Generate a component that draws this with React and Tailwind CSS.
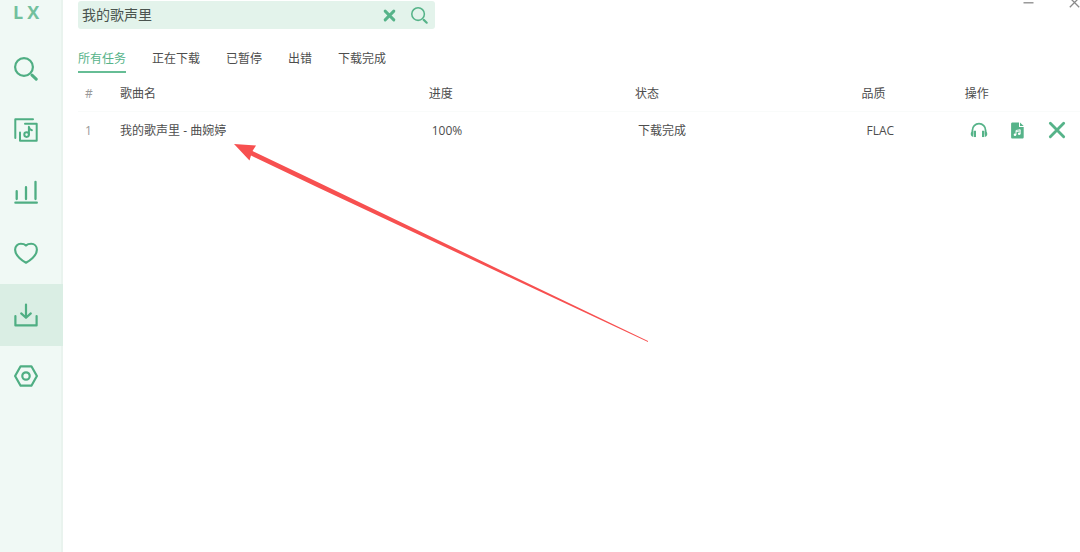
import React, { useState } from 'react';

const SearchIcon = ({ className }) => (
  <svg viewBox="0 0 24 24" className={className} fill="none" stroke="currentColor">
    <circle cx="10" cy="10" r="8.9" strokeWidth="2.2" />
    <path d="M18 18.2L22.2 22.2" strokeWidth="3" strokeLinecap="round" />
  </svg>
);

const SongListIcon = ({ className }) => (
  <svg viewBox="0 0 24 24" className={className} fill="none" stroke="currentColor" strokeWidth="2" strokeLinecap="round" strokeLinejoin="round">
    <path d="M1.3 20V1.3H19" />
    <path d="M6 14.5V22.7H22.7V5.8H11" />
    <circle cx="12.6" cy="16.6" r="2.3" />
    <path d="M14.9 16.6V8.8C15.2 10.6 16.2 11.7 17.9 12.2" />
  </svg>
);

const LeaderboardIcon = ({ className }) => (
  <svg viewBox="0 0 24 24" className={className} fill="none" stroke="currentColor" strokeWidth="2.3" strokeLinecap="round">
    <path d="M1.4 22.7H22.8" />
    <path d="M2.7 19V11.2M12 19V7.2M21.5 19V1.8" />
  </svg>
);

const HeartIcon = ({ className }) => (
  <svg viewBox="0 0 24 24" className={className} fill="none" stroke="currentColor" strokeWidth="2.1" strokeLinejoin="round">
    <path d="M12 21.8C9 20.2 1.1 15 1.1 8.8C1.1 5.2 3.6 2.8 6.8 2.8C9 2.8 10.7 3.3 12 4.6C13.3 3.3 15 2.8 17.2 2.8C20.4 2.8 22.9 5.2 22.9 8.8C22.9 15 15 20.2 12 21.8Z" />
  </svg>
);

const DownloadIcon = ({ className }) => (
  <svg viewBox="0 0 24 24" className={className} fill="none" stroke="currentColor" strokeWidth="2.2" strokeLinecap="round" strokeLinejoin="round">
    <path d="M1.4 13.1V22.4H22.6V13.1" />
    <path d="M12 1.6V14.6M7.2 10.4L12 14.8L16.8 10.4" />
  </svg>
);

const SettingIcon = ({ className }) => (
  <svg viewBox="0 0 24 24" className={className} fill="none" stroke="currentColor" strokeWidth="2.2" strokeLinejoin="round">
    <path d="M6.6 2.3H17.4L22.9 12L17.4 21.7H6.6L1.1 12Z" />
    <circle cx="12" cy="12" r="3.7" />
  </svg>
);

const CrossIcon = ({ className, strokeWidth }) => (
  <svg viewBox="0 0 24 24" className={className} fill="none" stroke="currentColor" strokeWidth={strokeWidth} strokeLinecap="round">
    <path d="M4 4L20 20M20 4L4 20" />
  </svg>
);

const HeadphoneIcon = ({ className }) => (
  <svg viewBox="0 0 24 24" className={className} fill="currentColor">
    <path d="M3.2 18V12.5C3.2 7.4 7 3.6 12 3.6C17 3.6 20.8 7.4 20.8 12.5V18" fill="none" stroke="currentColor" strokeWidth="2.4" />
    <path d="M5.2 13H8V21.4H5.2Z" />
    <path d="M16 13H18.8V21.4H16Z" />
    <path d="M4.3 13.2C2.1 13.5 1 15 1 17C1 19.2 2.1 21 4.3 21.2Z" />
    <path d="M19.7 13.2C21.9 13.5 23 15 23 17C23 19.2 21.9 21 19.7 21.2Z" />
  </svg>
);

const MusicFileIcon = ({ className }) => (
  <svg viewBox="0 0 13 17" className={className}>
    <path d="M1.5 0.5H8V5H12.7V15C12.7 16 12.2 16.5 11.2 16.5H1.5C0.6 16.5 0.1 16 0.1 15V2C0.1 1 0.6 0.5 1.5 0.5Z" fill="currentColor" />
    <path d="M9 0.5L12.7 4.1H9Z" fill="currentColor" />
    <path d="M5 12.6V8.5L9.2 7.7V11.7M5 9.7L9.2 8.9" fill="none" stroke="#fff" strokeWidth="0.9" />
    <circle cx="4" cy="12.7" r="1.3" fill="#fff" />
    <circle cx="8.2" cy="11.8" r="1.3" fill="#fff" />
  </svg>
);

const menus = [
  { id: 'search', label: '搜索', Icon: SearchIcon },
  { id: 'songList', label: '歌单', Icon: SongListIcon },
  { id: 'leaderboard', label: '排行榜', Icon: LeaderboardIcon },
  { id: 'love', label: '收藏', Icon: HeartIcon },
  { id: 'download', label: '下载', Icon: DownloadIcon },
  { id: 'setting', label: '设置', Icon: SettingIcon },
];

const tabs = ['所有任务', '正在下载', '已暂停', '出错', '下载完成'];

const initialTasks = [
  { id: 1, name: '我的歌声里 - 曲婉婷', progress: '100%', status: '下载完成', quality: 'FLAC' },
];

const Sidebar = ({ active, setActive }) => (
  <aside className="w-[63px] shrink-0 border-r-2 border-[#e9f3ee] bg-[#f0f9f5] text-[#4fae83]">
    <div className="flex h-[38px] gap-1 pl-[13px] text-lg leading-6 font-bold text-[#72c09d]">
      <span>L</span>
      <span>X</span>
    </div>
    <nav className="grid h-[369px] grid-rows-6">
      {menus.map(({ id, label, Icon }) => (
        <button
          key={id}
          aria-label={label}
          onClick={() => setActive(id)}
          className={`-mr-0.5 flex items-center pl-[14px] ${active === id ? 'bg-[#daeee4]' : ''}`}
        >
          <Icon className="size-6" />
        </button>
      ))}
    </nav>
  </aside>
);

const SearchBar = ({ keyword, setKeyword }) => (
  <div className="flex h-7 w-[357px] items-center rounded-[3px] bg-[#e3f3eb] text-[#56b389]">
    <input
      type="text"
      aria-label="搜索歌曲"
      value={keyword}
      onChange={(e) => setKeyword(e.target.value)}
      className="min-w-0 flex-1 bg-transparent pl-1 text-sm text-[#4a544f] outline-none"
    />
    <button aria-label="清除" onClick={() => setKeyword('')} className="flex w-[30px] justify-center">
      <CrossIcon className="size-[13px]" strokeWidth="5.5" />
    </button>
    <button aria-label="搜索" className="flex w-[31px] justify-center">
      <SearchIcon className="size-[17px]" />
    </button>
  </div>
);

const TaskTable = ({ tasks, removeTask }) => (
  <table className="w-full table-fixed text-left text-xs text-[#4d4d4d]">
    <thead>
      <tr className="h-9 border-b border-[#f9fbfa]">
        <th className="w-[3.6%] pt-0.5 pl-[7px] font-normal text-[#999]">#</th>
        <th className="w-[30.8%] px-1.5 pt-0.5 font-normal">歌曲名</th>
        <th className="w-[20.6%] px-1.5 pt-0.5 font-normal">进度</th>
        <th className="w-[22.6%] px-1.5 pt-0.5 font-normal">状态</th>
        <th className="w-[10.3%] px-1.5 pt-0.5 font-normal">品质</th>
        <th className="w-[12.1%] px-1.5 pt-0.5 font-normal">操作</th>
      </tr>
    </thead>
    <tbody>
      {tasks.map((task) => (
        <tr key={task.id} className="h-[38px]">
          <td className="pt-0.5 pl-[7px] text-[#999]">{task.id}</td>
          <td className="px-1.5 pt-0.5">{task.name}</td>
          <td className="px-[9px] pt-0.5">{task.progress}</td>
          <td className="px-[9px] pt-0.5">{task.status}</td>
          <td className="px-[11px] pt-0.5">{task.quality}</td>
          <td className="pl-2.5">
            <div className="flex items-center gap-[19px] text-[#56b389]">
              <button aria-label="播放" className="flex size-5 items-center justify-center">
                <HeadphoneIcon className="size-[18px]" />
              </button>
              <button aria-label="打开文件" className="flex size-5 items-center justify-center">
                <MusicFileIcon className="h-[17px] w-[13px]" />
              </button>
              <button aria-label="删除" onClick={() => removeTask(task.id)} className="flex size-5 items-center justify-center">
                <CrossIcon className="size-5" strokeWidth="3.4" />
              </button>
            </div>
          </td>
        </tr>
      ))}
    </tbody>
  </table>
);

const App = () => {
  const [active, setActive] = useState('download');
  const [keyword, setKeyword] = useState('我的歌声里');
  const [tab, setTab] = useState(tabs[0]);
  const [tasks, setTasks] = useState(initialTasks);

  const removeTask = (id) => setTasks(tasks.filter((task) => task.id !== id));

  return (
    <div className="relative flex min-h-screen overflow-hidden bg-white font-['Open_Sans','Noto_Sans_CJK_SC',sans-serif]">
      <Sidebar active={active} setActive={setActive} />

      <main className="min-w-0 flex-1 pt-px pl-[15px]">
        <div className="flex items-start justify-between">
          <SearchBar keyword={keyword} setKeyword={setKeyword} />
          {/* Window controls */}
          <div className="-mt-1 flex gap-[35px] text-[#8a8a8a]">
            <button aria-label="最小化">
              <svg viewBox="0 0 11 11" className="size-[11px]" stroke="currentColor" strokeWidth="1.3">
                <path d="M0.5 5.8H10.5" />
              </svg>
            </button>
            <button aria-label="关闭">
              <svg viewBox="0 0 11 11" className="size-[11px]" stroke="currentColor" strokeWidth="1.3">
                <path d="M0.8 0.8L10.2 10.2M10.2 0.8L0.8 10.2" />
              </svg>
            </button>
          </div>
        </div>

        <div className="mt-[17px] mb-0.5 flex gap-[26px] text-xs text-[#4d4d4d]">
          {tabs.map((item) => (
            <button
              key={item}
              onClick={() => setTab(item)}
              className={`h-[27px] border-b-2 leading-6 ${
                tab === item ? 'border-[#66bd95] text-[#56b389]' : 'border-transparent'
              }`}
            >
              {item}
            </button>
          ))}
        </div>

        <TaskTable tasks={tasks} removeTask={removeTask} />
      </main>

      {/* Arrow pointing at the finished song */}
      <svg viewBox="0 0 416 200" className="pointer-events-none absolute top-[143px] left-[233px] h-[200px] w-[416px]">
        <path d="M1 1L23 2.5L19.5 8L87 40.3L415 198L415 199L86 45L18 12.5L16.5 17.5Z" fill="#f75050" />
      </svg>
    </div>
  );
};

export default App;
